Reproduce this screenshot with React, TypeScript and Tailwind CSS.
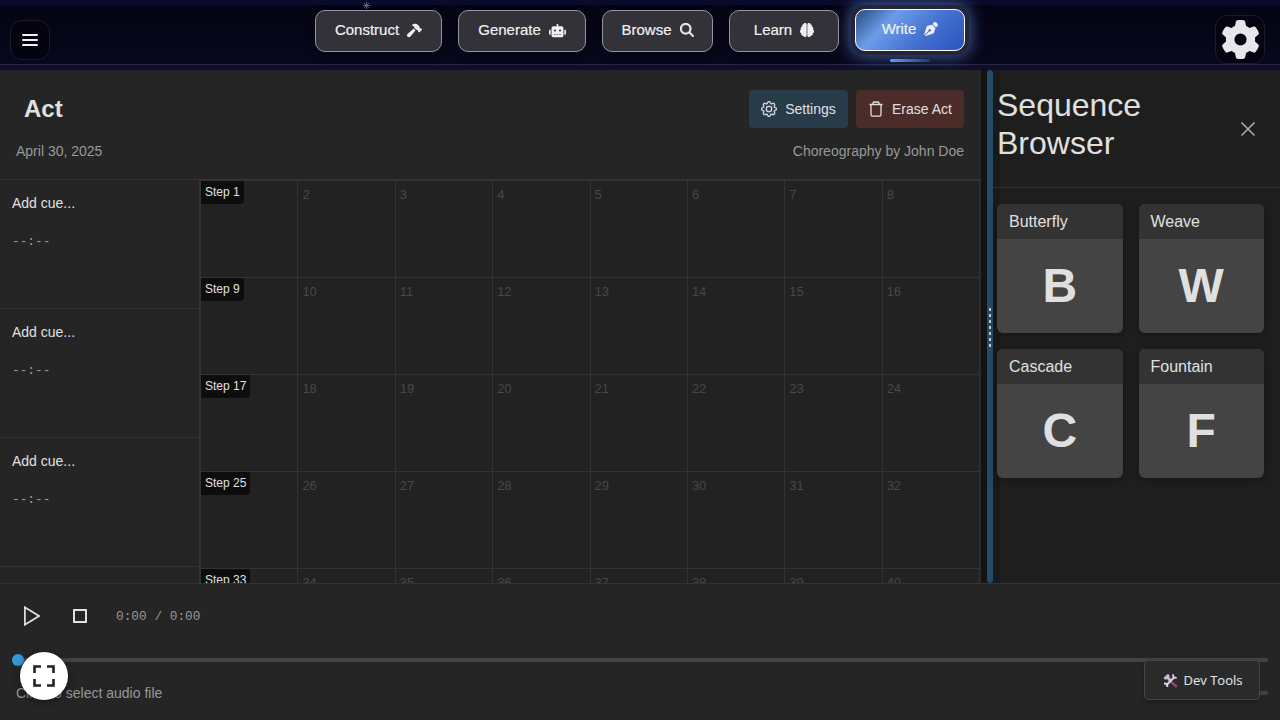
import type { ReactNode } from "react";
import { FaHammer, FaRobot, FaMagnifyingGlass, FaBrain, FaPenNib, FaGear } from "react-icons/fa6";
import { BsGear } from "react-icons/bs";

function NavButton({ label, icon, width }: { label: string; icon: ReactNode; width: string }) {
  return (
    <button className={`flex h-[42px] items-center justify-center gap-2 rounded-[10px] border border-[#94949c] bg-[#333238] text-[15px] font-medium text-[#f0f0f0] shadow-[0_4px_8px_rgba(0,0,0,0.35)] [-webkit-text-stroke:0.2px] ${width}`}>
      <span className="-mt-0.5">{label}</span>
      <span className="-mt-0.5">{icon}</span>
    </button>
  );
}

function Header() {
  return (
    <header className="h-[70px] shrink-0 bg-[#0f0d2f]">
      <div className="h-[5px] bg-[#0a0a2a]" />
      <div className="relative flex h-[60px] justify-between border-b border-[#29293a] bg-gradient-to-b from-[#040414] to-[#08081d] px-[10px]">
        <button className="mt-[15px] flex size-10 items-center justify-center rounded-xl border border-[#1d1c27] bg-[#040310]">
          <svg width="16" height="14" viewBox="0 0 16 14" stroke="#f0f0f0" strokeWidth="2" strokeLinecap="round">
            <path d="M1 2h14M1 7h14M1 12h14" />
          </svg>
        </button>
        <nav className="ml-[15px] mt-[5px] flex gap-4">
          <NavButton width="w-[127px]" label="Construct" icon={<FaHammer size={15} />} />
          <NavButton width="w-[128px]" label="Generate" icon={<FaRobot size={17} />} />
          <NavButton width="w-[111px]" label="Browse" icon={<FaMagnifyingGlass size={14} stroke="currentColor" strokeWidth={14} />} />
          <NavButton width="w-[110px]" label="Learn" icon={<FaBrain size={14} stroke="currentColor" strokeWidth={10} />} />
          <div className="-mt-px flex flex-col items-center gap-2">
            <button className="flex h-[42px] w-[110px] items-center justify-center gap-2 rounded-[10px] border border-white bg-[linear-gradient(135deg,#294a7d_0%,#6c9ce9_30%,#4674d2_60%,#2a52be_100%)] pb-0.5 text-[15px] text-[#f0f0f0] shadow-[0_0_0_4px_#252539,0_0_15px_6px_rgba(98,143,220,0.6)] [-webkit-text-stroke:0.2px]">
              Write <FaPenNib size={14} />
            </button>
            <div className="h-[3px] w-10 rounded-sm bg-gradient-to-r from-[#6c9ce9] to-[#1e3c72]" />
          </div>
        </nav>
        <button className="mr-[5px] mt-[10px] flex h-[49px] w-[50px] items-center justify-center rounded-xl border border-[#1d1c27] bg-[#040310] pb-px text-[#e7e7e9]">
          <FaGear size={39} />
        </button>
        <svg className="absolute left-[363px] -top-[3px]" width="7" height="7" viewBox="0 0 7 7" stroke="#8e8ea5" strokeWidth=".6">
          <path d="M3.5 0v7M0 3.5h7M1 1l5 5M6 1 1 6" />
        </svg>
      </div>
    </header>
  );
}

function ActHeader() {
  return (
    <div className="flex h-[110px] flex-col border-b border-[#333] pl-4 pr-[17px] pt-5">
      <div className="flex h-[38px] items-center justify-between">
        <h1 className="pl-2 text-2xl font-bold text-[#e0e0e0]">Act</h1>
        <div className="flex gap-2 text-[14px] text-[#e0e0e0]">
          <button className="flex h-[38px] w-[99px] items-center justify-center gap-2 rounded bg-[#283b49]">
            <BsGear size={16} stroke="currentColor" strokeWidth={0.3} />
            Settings
          </button>
          <button className="flex h-[38px] w-[108px] items-center justify-center gap-2 rounded bg-[#4c2c29]">
            <svg width="16" height="16" viewBox="0 0 16 16" fill="none" stroke="currentColor" strokeWidth="1.3">
              <path d="M1.5 3.5h13M3 3.5v10q0 1.7 1.5 1.7h7q1.5 0 1.5-1.7v-10M5 3.5V2q0-1 1-1h4q1 0 1 1v1.5" />
            </svg>
            Erase Act
          </button>
        </div>
      </div>
      <div className="mt-[13px] flex justify-between text-[14px] leading-5 text-[#999]">
        <span>April 30, 2025</span>
        <span>Choreography by John Doe</span>
      </div>
    </div>
  );
}

function Cues() {
  return (
    <div className="w-[200px] shrink-0 border-r border-[#333]">
      {[0, 1, 2].map((i) => (
        <div key={i} className="h-[129px] border-b border-[#333] px-3 pt-[13px]">
          <div className="text-[14px] leading-5 text-[#e0e0e0]">Add cue...</div>
          <div className="mt-[19px] font-['Liberation_Mono',monospace] text-[12.8px] leading-5 text-[#999]">--:--</div>
        </div>
      ))}
    </div>
  );
}

function StepGrid() {
  return (
    <div className="grid h-max w-[780px] grid-cols-8 border-l border-t border-[#333] bg-[#222]">
      {Array.from({ length: 40 }, (_, i) => (
        <div key={i} className="h-[97px] border-b border-r border-[#333]">
          {i % 8 === 0 ? (
            <span className="block h-[23px] w-max rounded-br bg-[#0d0d0d] px-1 text-[12px] leading-[22px] text-[#e0e0e0]">Step {i + 1}</span>
          ) : (
            <span className="block pl-1 pt-1 text-[13px] leading-5 text-[#484848]">{i + 1}</span>
          )}
        </div>
      ))}
    </div>
  );
}

function SequenceCard({ name }: { name: string }) {
  return (
    <div className="h-[129px] overflow-hidden rounded-md bg-[#444] shadow-[0_2px_8px_rgba(0,0,0,0.3)]">
      <div className="h-[35px] bg-[#333] pl-3 text-base leading-[35px] text-[#e0e0e0]">{name}</div>
      <div className="flex h-[94px] items-center justify-center pb-px text-5xl font-bold text-[#e0e0e0]">{name[0]}</div>
    </div>
  );
}

function Browser() {
  return (
    <aside className="flex-1 bg-gradient-to-r from-[#191919] from-[7px] to-[#1e1e1e] to-[7px]">
      <div className="flex h-[118px] items-start justify-between border-b border-[#333] pl-[4px] pr-6 pt-4">
        <h2 className="w-[180px] text-[32px] leading-[38.4px] text-[#e0e0e0]">Sequence Browser</h2>
        <svg className="mt-[35px]" width="16" height="16" viewBox="0 0 16 16" fill="none" stroke="#aaa" strokeWidth="1.6">
          <path d="m1.5 1.5 13 13m0-13-13 13" />
        </svg>
      </div>
      <div className="grid grid-cols-2 gap-4 pb-4 pl-1 pr-4 pt-4">
        {["Butterfly", "Weave", "Cascade", "Fountain"].map((name) => (
          <SequenceCard key={name} name={name} />
        ))}
      </div>
    </aside>
  );
}

function Splitter() {
  return (
    <div className="flex w-3 shrink-0 justify-end bg-[#131313]">
      <div className="flex w-1.5 flex-col items-center justify-center gap-[3px] rounded-[3px] bg-[#224b68] pt-px">
        {[0, 1, 2, 3, 4, 5, 6].map((i) => (
          <div key={i} className="h-[3px] w-0.5 bg-[#bccbd4]" />
        ))}
      </div>
    </div>
  );
}

function Player() {
  return (
    <footer className="relative h-[137px] shrink-0 border-t border-[#333] bg-[#252525]">
      <div className="flex h-16 items-center pl-6 text-[#e0e0e0]">
        <svg width="16" height="20" viewBox="0 0 16 20" fill="none" stroke="currentColor" strokeWidth="1.7">
          <path d="M.9 1.3v17.4L15 10z" />
        </svg>
        <div className="ml-[33px] size-[14px] border-2 border-[#e0e0e0]" />
        <div className="ml-[29px] pt-px font-['Liberation_Mono',monospace] text-[12.8px] text-[#999]">0:00 / 0:00</div>
      </div>
      <div className="flex h-6 items-center pl-3 pr-3">
        <div className="flex h-1 w-full items-center rounded-sm bg-[#444]">
          <div className="size-3 rounded-full bg-[#3498db]" />
        </div>
      </div>
      <div className="flex h-[42px] items-center justify-between pl-4 pr-3 text-[14px] text-[#999]">
        <span>Click to select audio file</span>
        <div className="h-1 w-20 rounded-sm bg-[#444]" />
      </div>
      <button className="absolute left-5 top-[68px] flex size-12 items-center justify-center rounded-full bg-white text-[#212529] shadow-[0_2px_8px_rgba(0,0,0,0.4)]">
        <svg width="22" height="22" viewBox="0 0 22 22" fill="none" stroke="currentColor" strokeWidth="2.6">
          <path d="M1.5 8V1.5H8M14 1.5h6.5V8M20.5 14v6.5H14M8 20.5H1.5V14" />
        </svg>
      </button>
      <button className="absolute left-[1144px] top-[76px] flex h-10 w-[116px] items-center justify-center gap-1.5 rounded border border-[#444] bg-[#2a2a2a] pl-px font-['Open_Sans',sans-serif] text-[13px] font-medium text-[#e0e0e0] shadow-[0_2px_5px_rgba(0,0,0,0.3)] [-webkit-text-stroke:0.1px]">
        <svg width="15" height="15" viewBox="0 0 15 15" fill="none">
          <path d="m6 7 7 6.2" stroke="#8e4a68" strokeWidth="2.6" strokeLinecap="round" />
          <path d="M1.4 5.8 6 2M4 4l3 3" stroke="#c5bdd6" strokeWidth="3" />
          <path d="m3 12.5 8-8" stroke="#ded4e8" strokeWidth="2.2" />
          <path d="M10.2 1.3q-1 3.2 3.5 3.5M1 10.5q3.4-.3 3.5 3.5" stroke="#ded4e8" strokeWidth="1.8" />
        </svg>
        <span className="pt-px">Dev Tools</span>
      </button>
    </footer>
  );
}

export default function App() {
  return (
    <div className="flex h-[720px] w-[1280px] flex-col overflow-hidden bg-[#252525] font-['Liberation_Sans',Arial,sans-serif]">
      <Header />
      <main className="flex h-[513px] overflow-hidden">
        <section className="w-[981px] shrink-0 bg-[#252525]">
          <ActHeader />
          <div className="flex">
            <Cues />
            <StepGrid />
          </div>
        </section>
        <Splitter />
        <Browser />
      </main>
      <Player />
    </div>
  );
}
